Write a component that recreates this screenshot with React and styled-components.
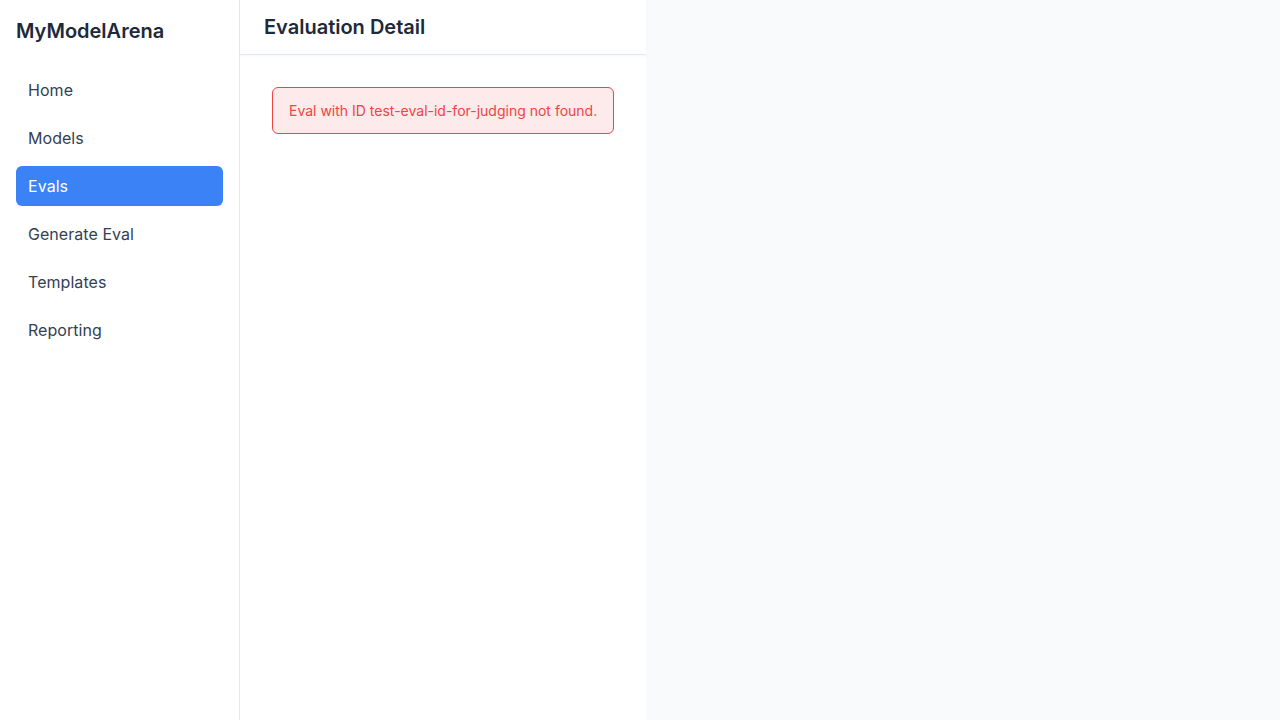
import React from "react";
import styled, { createGlobalStyle } from "styled-components";

const Global = createGlobalStyle`
  html, body { margin: 0; padding: 0; height: 100%; }
  body { font-family: Inter, "Noto Sans", sans-serif; background: #f9fafb; }
  #root { height: 100%; }
  * { box-sizing: border-box; }
`;

const Layout = styled.div`
  display: flex;
  height: 100vh;
  background: #f9fafb;
`;

const Sidebar = styled.aside`
  width: 240px;
  flex-shrink: 0;
  background: #ffffff;
  border-right: 1px solid #e5e7eb;
  padding: 16px;
  display: flex;
  flex-direction: column;
`;

const Logo = styled.div`
  font-size: 20px;
  line-height: 30px;
  font-weight: 600;
  color: #1e293b;
  margin-bottom: 24px;
`;

const Nav = styled.nav`
  display: flex;
  flex-direction: column;
  gap: 8px;
`;

const NavItem = styled.a`
  display: block;
  height: 40px;
  line-height: 40px;
  padding: 0 12px;
  border-radius: 6px;
  font-size: 16px;
  font-weight: 400;
  letter-spacing: 0.05px;
  color: ${(p) => (p.$active ? "#ffffff" : "#334155")};
  background: ${(p) => (p.$active ? "#3b82f6" : "transparent")};
  text-decoration: none;
`;

const Main = styled.main`
  width: fit-content;
  background: #ffffff;
  display: flex;
  flex-direction: column;
`;

const Header = styled.header`
  padding: 12px 24px;
  border-bottom: 1px solid #e2e8f0;
  box-shadow: 0 1px 2px rgba(15, 23, 42, 0.04);
`;

const Title = styled.h1`
  margin: 0;
  font-size: 20px;
  line-height: 30px;
  font-weight: 600;
  color: #1e293b;
`;

const Content = styled.div`
  padding: 32px;
`;

const ErrorBox = styled.div`
  padding: 12px 16px;
  border: 1px solid #ef4444;
  border-radius: 6px;
  background: #fdeaea;
  color: #ef4444;
  font-size: 14px;
  line-height: 21px;
  white-space: nowrap;
`;

const items = ["Home", "Models", "Evals", "Generate Eval", "Templates", "Reporting"];

export default function App() {
  return (
    <>
      <Global />
      <Layout>
        <Sidebar>
          <Logo>MyModelArena</Logo>
          <Nav>
            {items.map((it) => (
              <NavItem key={it} $active={it === "Evals"}>
                {it}
              </NavItem>
            ))}
          </Nav>
        </Sidebar>
        <Main>
          <Header>
            <Title>Evaluation Detail</Title>
          </Header>
          <Content>
            <ErrorBox>Eval with ID test-eval-id-for-judging not found.</ErrorBox>
          </Content>
        </Main>
      </Layout>
    </>
  );
}
